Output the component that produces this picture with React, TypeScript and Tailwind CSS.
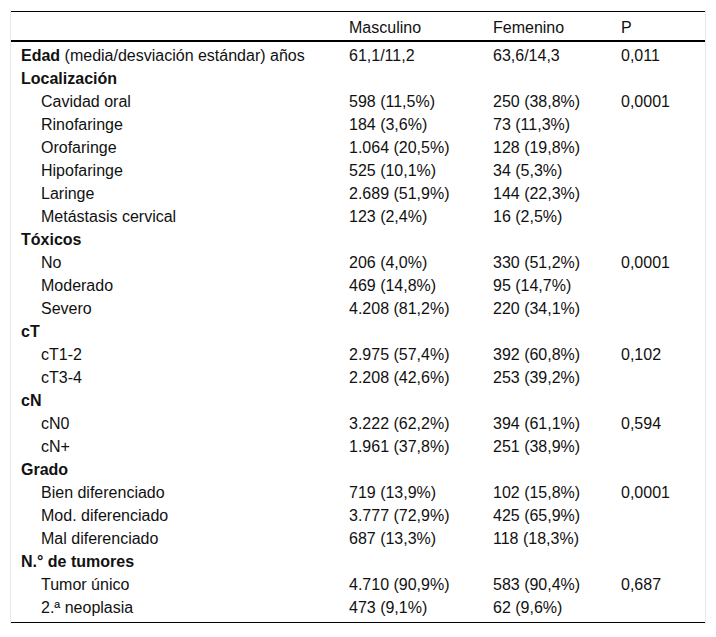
import React from "react";

type Row = { label: string; bold?: boolean; suffix?: string; indent?: boolean; m?: string; f?: string; p?: string };

const rows: Row[] = [
  { label: "Edad", bold: true, suffix: " (media/desviación estándar) años", m: "61,1/11,2", f: "63,6/14,3", p: "0,011" },
  { label: "Localización", bold: true },
  { label: "Cavidad oral", indent: true, m: "598 (11,5%)", f: "250 (38,8%)", p: "0,0001" },
  { label: "Rinofaringe", indent: true, m: "184 (3,6%)", f: "73 (11,3%)" },
  { label: "Orofaringe", indent: true, m: "1.064 (20,5%)", f: "128 (19,8%)" },
  { label: "Hipofaringe", indent: true, m: "525 (10,1%)", f: "34 (5,3%)" },
  { label: "Laringe", indent: true, m: "2.689 (51,9%)", f: "144 (22,3%)" },
  { label: "Metástasis cervical", indent: true, m: "123 (2,4%)", f: "16 (2,5%)" },
  { label: "Tóxicos", bold: true },
  { label: "No", indent: true, m: "206 (4,0%)", f: "330 (51,2%)", p: "0,0001" },
  { label: "Moderado", indent: true, m: "469 (14,8%)", f: "95 (14,7%)" },
  { label: "Severo", indent: true, m: "4.208 (81,2%)", f: "220 (34,1%)" },
  { label: "cT", bold: true },
  { label: "cT1-2", indent: true, m: "2.975 (57,4%)", f: "392 (60,8%)", p: "0,102" },
  { label: "cT3-4", indent: true, m: "2.208 (42,6%)", f: "253 (39,2%)" },
  { label: "cN", bold: true },
  { label: "cN0", indent: true, m: "3.222 (62,2%)", f: "394 (61,1%)", p: "0,594" },
  { label: "cN+", indent: true, m: "1.961 (37,8%)", f: "251 (38,9%)" },
  { label: "Grado", bold: true },
  { label: "Bien diferenciado", indent: true, m: "719 (13,9%)", f: "102 (15,8%)", p: "0,0001" },
  { label: "Mod. diferenciado", indent: true, m: "3.777 (72,9%)", f: "425 (65,9%)" },
  { label: "Mal diferenciado", indent: true, m: "687 (13,3%)", f: "118 (18,3%)" },
  { label: "N.° de tumores", bold: true },
  { label: "Tumor único", indent: true, m: "4.710 (90,9%)", f: "583 (90,4%)", p: "0,687" },
  { label: "2.ª neoplasia", indent: true, m: "473 (9,1%)", f: "62 (9,6%)" },
];

export default function App() {
  return (
    <div className="bg-white w-[716px] h-[637px] pt-[10px] text-[#111] text-[16px]" style={{ fontFamily: '"Liberation Sans", Arial, sans-serif' }}>
      <div className="ml-[10px] w-[696px] border-x border-[#e8e8e8] pt-px pb-[1px]">
        <div className="border-t border-black border-b pb-[5px]">
          <div className="grid grid-cols-[328px_144px_128px_94px] h-[30px] items-center leading-[30px] pt-[1px] border-b-2 border-black">
            <div />
            <div className="pl-[10px]">Masculino</div>
            <div className="pl-[10px]">Femenino</div>
            <div className="pl-[10px]">P</div>
          </div>
          {rows.map((r, i) => (
            <div key={i} className="grid grid-cols-[328px_144px_128px_94px] h-[23px] leading-[23px] pt-[2px]">
              <div className={r.indent ? "pl-[30px]" : "pl-[10px]"}>
                {r.bold ? <span className="font-bold">{r.label}</span> : r.label}
                {r.suffix}
              </div>
              <div className="pl-[10px]">{r.m}</div>
              <div className="pl-[10px]">{r.f}</div>
              <div className="pl-[10px]">{r.p}</div>
            </div>
          ))}
        </div>
      </div>
    </div>
  );
}
